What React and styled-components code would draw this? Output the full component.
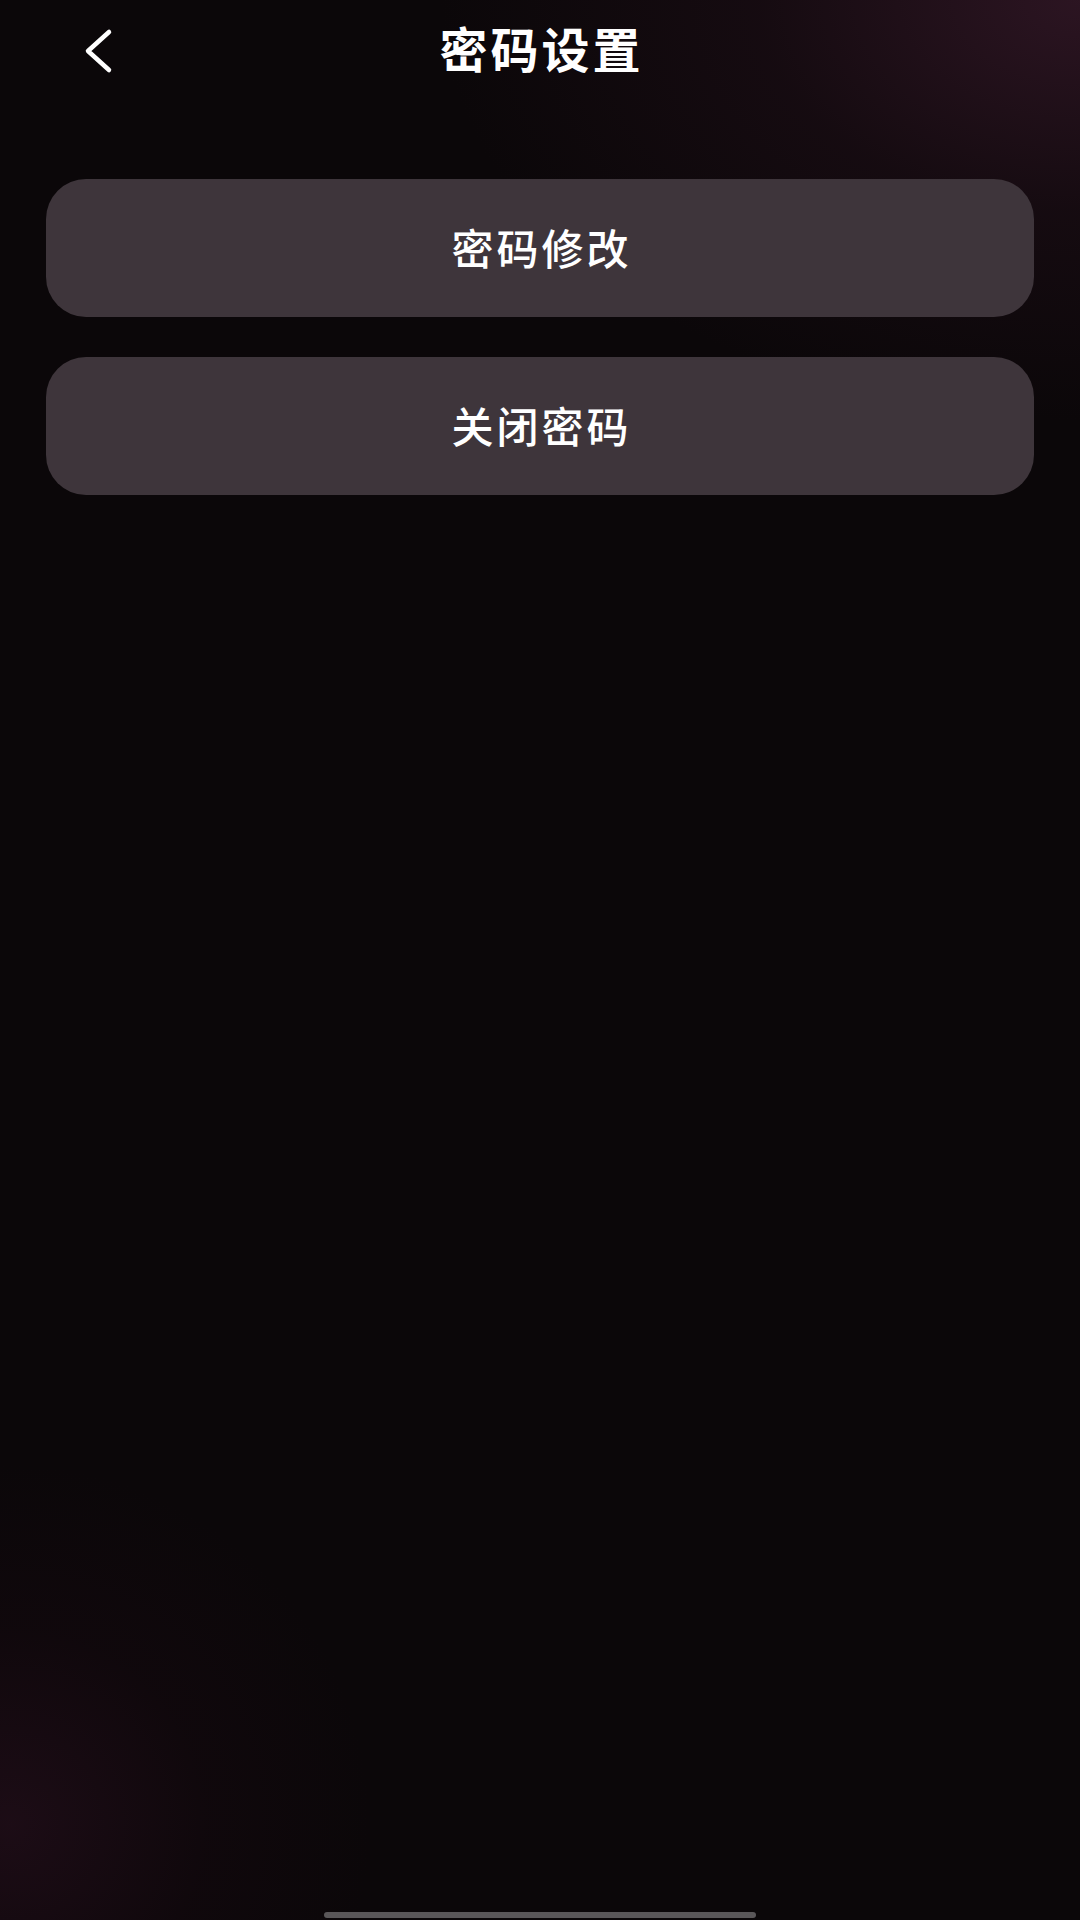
import React from "react";
import styled, { createGlobalStyle } from "styled-components";

const GlobalStyle = createGlobalStyle`
  html, body {
    margin: 0;
    padding: 0;
    background: #0b0709;
  }
  * {
    box-sizing: border-box;
  }
`;

const Screen = styled.div`
  width: 1080px;
  height: 1920px;
  display: flex;
  flex-direction: column;
  font-family: "Noto Sans CJK SC", "Noto Sans", sans-serif;
  color: #ffffff;
  background:
    radial-gradient(ellipse 640px 420px at 1080px 0px, rgba(52, 24, 40, 0.8), rgba(34, 16, 26, 0.45) 50%, rgba(11, 7, 9, 0) 100%),
    radial-gradient(circle 360px at 10px 1825px, rgba(34, 14, 26, 0.75), rgba(22, 9, 16, 0.4) 55%, rgba(11, 7, 9, 0) 100%),
    #0b0709;
  overflow: hidden;
`;

const Header = styled.header`
  height: 102px;
  display: grid;
  grid-template-columns: 180px 1fr 180px;
  align-items: center;
`;

const BackButton = styled.button`
  justify-self: start;
  margin-left: 76px;
  width: 44px;
  height: 56px;
  padding: 0;
  border: none;
  background: none;
  color: #ffffff;
  display: flex;
  align-items: center;
  justify-content: center;
  cursor: pointer;
`;

const Title = styled.h1`
  margin: 0 0 8px;
  text-align: center;
  font-size: 48px;
  font-weight: 700;
  letter-spacing: 3px;
  line-height: 1;
  padding-left: 3px;
`;

const Menu = styled.div`
  display: flex;
  flex-direction: column;
  gap: 40px;
  padding: 77px 46px 0;
`;

const MenuItem = styled.button`
  height: 138px;
  border: none;
  border-radius: 40px;
  background: #3e353b;
  color: #ffffff;
  font-family: inherit;
  font-size: 42px;
  font-weight: 500;
  letter-spacing: 3px;
  padding: 0 0 3px 3px;
  cursor: pointer;
`;

const HomeBar = styled.div`
  margin: auto auto 2px;
  width: 432px;
  height: 6px;
  border-radius: 3px;
  background: #5a5759;
`;

function BackIcon() {
  return (
    <svg width="32" height="46" viewBox="0 0 32 46" fill="none">
      <path
        d="M27 4 L6 23 L27 42"
        stroke="currentColor"
        strokeWidth="4.5"
        strokeLinecap="round"
        strokeLinejoin="round"
      />
    </svg>
  );
}

export default function App() {
  const items = ["密码修改", "关闭密码"];

  return (
    <>
      <GlobalStyle />
      <Screen>
        <Header>
          <BackButton aria-label="返回">
            <BackIcon />
          </BackButton>
          <Title>密码设置</Title>
          <span />
        </Header>
        <Menu>
          {items.map((label) => (
            <MenuItem key={label}>{label}</MenuItem>
          ))}
        </Menu>
        <HomeBar />
      </Screen>
    </>
  );
}
